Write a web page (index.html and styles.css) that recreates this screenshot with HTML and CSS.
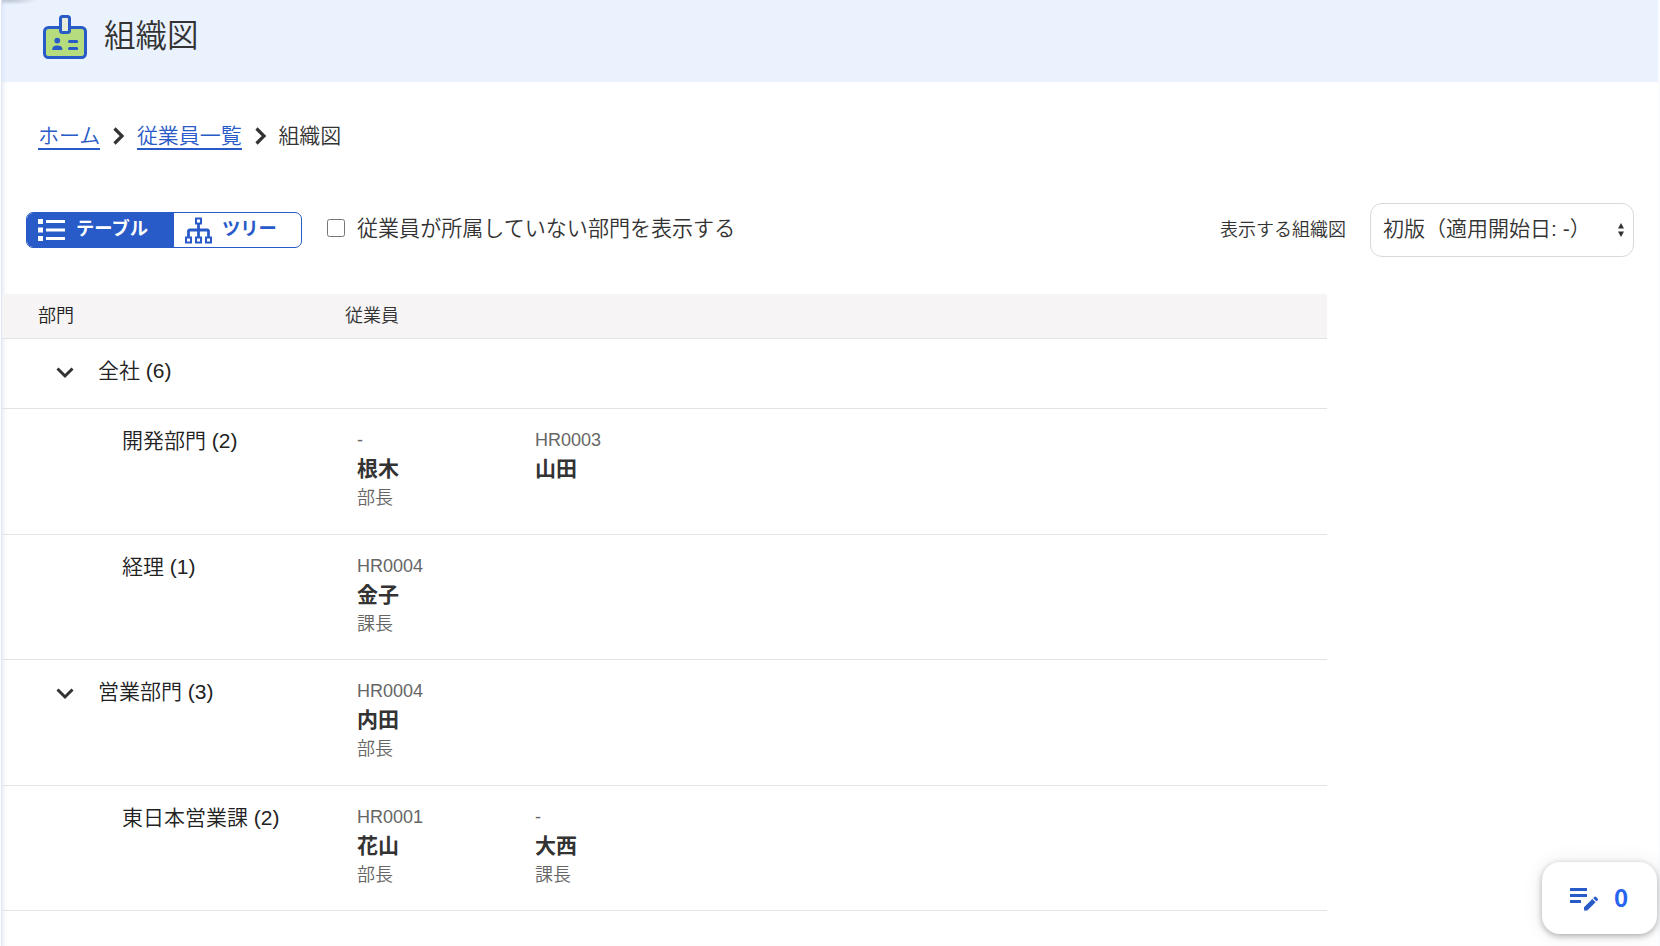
FILE: index.html
```html
<!DOCTYPE html>
<html lang="ja">
<head>
<meta charset="utf-8">
<title>組織図</title>
<link rel="stylesheet" href="styles.css">
</head>
<body>
<div class="page">
  <header class="header">
    <svg class="badge" viewBox="0 0 44 45" fill="none">
      <rect x="1.5" y="12.5" width="41" height="30" rx="4" fill="#b5dc7d" stroke="#285ac8" stroke-width="3"/>
      <rect x="17.5" y="1.5" width="9" height="16" rx="2" fill="#e6ecd9" stroke="#285ac8" stroke-width="3"/>
      <circle cx="14.3" cy="25.6" r="2.900" fill="#285ac8"/>
      <path d="M9.300 35v-1.200c0-2.300 2-3.400 5-3.400s5 1.100 5 3.400V35z" fill="#285ac8"/>
      <path d="M26.500 26.600h7.200M26.500 33.400h7.200" stroke="#285ac8" stroke-width="3" stroke-linecap="round"/>
    </svg>
    <h1 class="title">組織図</h1>
  </header>

  <nav class="crumbs">
    <a class="link" href="#">ホーム</a>
    <svg class="sep" viewBox="0 0 12 18"><path d="M1.500 1.500L9 9l-7.500 7.500" fill="none" stroke="#333" stroke-width="3.200"/></svg>
    <a class="link" href="#">従業員一覧</a>
    <svg class="sep" viewBox="0 0 12 18"><path d="M1.500 1.500L9 9l-7.500 7.500" fill="none" stroke="#333" stroke-width="3.200"/></svg>
    <span>組織図</span>
  </nav>

  <div class="toolbar">
    <div class="toggle">
      <button class="tab tab-on">
        <svg class="ico" viewBox="0 0 27 24" fill="#fff"><path d="M0 1h5v5H0zM0 9.500h5v5H0zM0 18h5v5H0zM8 2h19v3H8zM8 10.500h19v3H8zM8 19h19v3H8z"/></svg>
        <span>テーブル</span>
      </button>
      <button class="tab">
        <svg class="ico ico-tree" viewBox="0 0 27 27" fill="none" stroke="#285ac8" stroke-width="2"><path d="M11 1.500h5v5h-5zM1 20.500h5v5H1zM11 20.500h5v5h-5zM21 20.500h5v5h-5z"/><path d="M13.500 7v13M3.500 20v-5.500q0-1.500 1.500-1.500h17q1.500 0 1.500 1.500V20" stroke-width="2.800"/></svg>
        <span>ツリー</span>
      </button>
    </div>
    <label class="check"><input class="box" type="checkbox"><span>従業員が所属していない部門を表示する</span></label>
    <span class="select-label">表示する組織図</span>
    <div class="select"><span>初版（適用開始日: -）</span>
      <svg class="arrows" viewBox="0 0 6 14" fill="#333"><path d="M3 0l3 5.500H0zM3 14l3-5.500H0z"/></svg>
    </div>
  </div>

  <main class="table">
    <div class="row head"><div class="dept">部門</div><div>従業員</div></div>
    <div class="row root">
      <div class="dept parent"><svg class="chev" viewBox="0 0 18 12"><path d="M1.500 1.500L9 9l7.500-7.500" fill="none" stroke="#333" stroke-width="3"/></svg><span>全社 (6)</span></div>
    </div>
    <div class="row">
      <div class="dept child">開発部門 (2)</div>
      <div class="people">
        <div class="person"><span class="code">-</span><b class="name">根木</b><span class="role">部長</span></div>
        <div class="person"><span class="code">HR0003</span><b class="name">山田</b></div>
      </div>
    </div>
    <div class="row">
      <div class="dept child">経理 (1)</div>
      <div class="people">
        <div class="person"><span class="code">HR0004</span><b class="name">金子</b><span class="role">課長</span></div>
      </div>
    </div>
    <div class="row">
      <div class="dept parent"><svg class="chev" viewBox="0 0 18 12"><path d="M1.500 1.500L9 9l7.500-7.500" fill="none" stroke="#333" stroke-width="3"/></svg><span>営業部門 (3)</span></div>
      <div class="people">
        <div class="person"><span class="code">HR0004</span><b class="name">内田</b><span class="role">部長</span></div>
      </div>
    </div>
    <div class="row">
      <div class="dept child">東日本営業課 (2)</div>
      <div class="people">
        <div class="person"><span class="code">HR0001</span><b class="name">花山</b><span class="role">部長</span></div>
        <div class="person"><span class="code">-</span><b class="name">大西</b><span class="role">課長</span></div>
      </div>
    </div>
  </main>
</div>
<button class="fab">
  <svg class="memo" viewBox="0 0 28 23" fill="#285ac8"><path d="M0 0h17v3H0zM0 6h17v3H0zM0 12h11v3H0zM14 19.300l8.300-8.300 3.300 3.300-8.300 8.300H14zM23.200 10.100l1.100-1.100q.9-.8 1.800 0l1.500 1.500q.8.900 0 1.800l-1.100 1.100z"/></svg>
  <span>0</span>
</button>
</body>
</html>
```
FILE: styles.css
```css
* { box-sizing: border-box; }
body {
  margin: 0;
  height: 946px;
  overflow: hidden;
  background: #fff;
  color: #333;
  font: 350 21px/30px "Liberation Sans", "Noto Sans CJK JP", sans-serif;
}
button { font: inherit; border: 0; padding: 0; background: none; }
.page {
  height: 946px;
  margin-left: 1px;
  border-left: 1px solid #dce6fb;
  border-right: 2px solid #fafbfd;
  box-shadow: inset 5px 0 4px -3px rgba(60, 80, 140, .1);
}
.header {
  display: flex;
  align-items: flex-start;
  height: 82px;
  padding: 15px 0 0 41px;
  background:
    radial-gradient(ellipse 28px 5px at 8px 0, rgba(50, 60, 80, .25), transparent) no-repeat,
    linear-gradient(90deg, rgba(60, 80, 140, .05), transparent 5px) no-repeat,
    #eaf2fe;
}
.badge { width: 44px; height: 45px; }
.title { margin: -1px 0 0 17px; font-size: 31.500px; font-weight: 350; line-height: 45px; }
.crumbs { display: flex; align-items: center; height: 30px; margin: 39px 0 0 36px; }
.link { color: #285ac8; text-decoration: none; border-bottom: 2px solid #285ac8; line-height: 25px; }
.sep { width: 12px; height: 18px; margin: 0 11.500px 0 13px; }
.toolbar { display: flex; align-items: center; height: 54px; margin-top: 52px; padding: 0 24px; }
.toggle {
  display: flex;
  width: 276px;
  height: 36px;
  border: 1px solid #285ac8;
  border-radius: 7px;
  overflow: hidden;
}
.tab { display: flex; align-items: center; width: 127px; padding-left: 11px; color: #285ac8; font-weight: 700; font-size: 18.300px; line-height: 30px; }
.tab-on { width: 147px; background: #285ac8; color: #fff; }
.tab span { margin: -3px 0 0 11px; }
.tab:last-child span { margin-left: 10px; }
.ico { width: 27px; height: 24px; }
.ico-tree { height: 27px; }
.check { display: flex; align-items: center; margin: -2px 0 0 25px; font-size: 21.060px; }
.box { width: 18px; height: 18px; margin: -3px 12px 0 0; }
.select-label { margin-left: auto; font-size: 18px; }
.select {
  display: flex;
  align-items: center;
  justify-content: space-between;
  width: 264px;
  height: 54px;
  margin-left: 24px;
  padding: 0 9px 2px 12px;
  border: 1px solid #d9d9d9;
  border-radius: 12px;
}
.arrows { width: 6px; height: 14px; margin-top: 2px; }
.table { width: 1325px; margin-top: 37px; }
.row { display: flex; height: 125.600px; padding: 17px 0 0 36px; border-bottom: 1px solid #e3e3e3; }
.head { height: 45px; padding-top: 7px; background: #f6f4f5; font-size: 18px; }
.root { height: 70px; }
.dept { width: 307px; flex: none; color: #222; }
.parent { display: flex; align-items: flex-start; padding-left: 18px; }
.chev { width: 18px; height: 12px; margin: 11px 24px 0 0; }
.child { padding-left: 84px; }
.people { display: flex; padding-left: 12px; }
.person { display: flex; flex-direction: column; width: 178px; font-size: 18px; color: #666; line-height: 29px; }
.name { margin-top: -1px; font-size: 21px; font-weight: 700; color: #333; }
.role { margin-top: 1px; }
.fab {
  position: absolute;
  right: 3px;
  bottom: 12px;
  display: flex;
  align-items: center;
  width: 115px;
  height: 72px;
  padding-left: 28px;
  border-radius: 18px;
  background: #fff;
  box-shadow: 0 2px 6px rgba(0, 0, 0, .3), 0 0 22px rgba(0, 0, 0, .08);
  color: #2864f0;
  font: 700 24px/30px "Noto Sans CJK JP", sans-serif;
}
.memo { width: 28px; height: 23px; margin-top: 3px; }
.fab span { margin: -2px 0 0 16px; }
```
